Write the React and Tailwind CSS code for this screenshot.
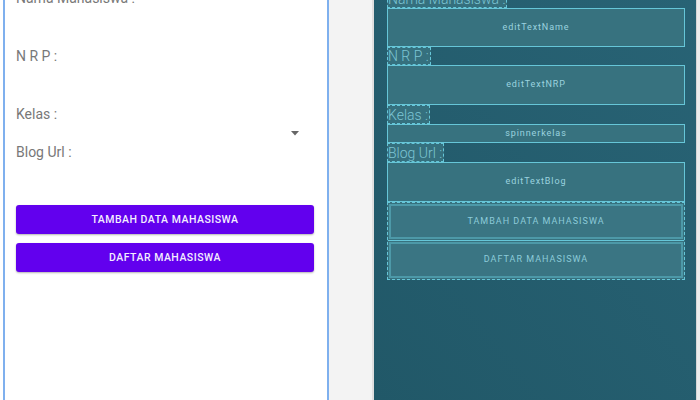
const FONT = { fontFamily: "Roboto, 'Liberation Sans', sans-serif" };

const ROWS = [
  { type: "label", text: "Nama Mahasiswa :", h: "h-[19px]" },
  { type: "edit", id: "editTextName", h: "h-[39px]" },
  { type: "label", text: "N R P :", h: "h-[18px]" },
  { type: "edit", id: "editTextNRP", h: "h-[40px]" },
  { type: "label", text: "Kelas :", h: "h-[19px]" },
  { type: "spinner", id: "spinnerkelas", h: "h-[19px]" },
  { type: "label", text: "Blog Url :", h: "h-[19px]" },
  { type: "edit", id: "editTextBlog", h: "h-[40px]" },
];

const BUTTONS = ["TAMBAH DATA MAHASISWA", "DAFTAR MAHASISWA"];

function DesignView() {
  return (
    <div className="flex flex-col -mt-[11px] pl-[11px] pr-[13px]">
      {ROWS.map((r, i) => {
        if (r.type === "label")
          return (
            <div key={i} className={`${r.h} flex items-center text-[14px] text-[#787878]`}>
              {r.text}
            </div>
          );
        if (r.type === "spinner")
          return (
            <div key={i} className={`${r.h} flex items-center justify-end pr-[15px]`}>
              <svg width="8" height="5" viewBox="0 0 8 5">
                <path d="M0 0h8L4 4.5z" fill="#666" />
              </svg>
            </div>
          );
        return <div key={i} className={r.h} />;
      })}
      {BUTTONS.map((b) => (
        <div key={b} className="h-[38px] pt-[3px] pb-[6px]">
          <div className="h-full rounded-[3px] bg-[#6200ee] shadow-[0_1px_2px_rgba(0,0,0,0.3)] flex items-center justify-center text-[#f4eeff] text-[10.5px] font-medium tracking-[0.5px]">
            {b}
          </div>
        </div>
      ))}
    </div>
  );
}

function BlueprintView() {
  return (
    <div className="flex flex-col -mt-[11px]">
      {ROWS.map((r, i) => {
        if (r.type === "label")
          return (
            <div key={i} className={`${r.h} flex`}>
              <div className="h-full pr-[1px] border border-dashed border-[#66c6d8] bg-[#35707e] flex items-center text-[14px] font-light text-[#7cc5d4] leading-none whitespace-nowrap">
                {r.text}
              </div>
            </div>
          );
        return (
          <div
            key={i}
            className={`${r.h} border border-[#66c6d8] bg-[#37727f] flex items-center justify-center text-[9px] tracking-[0.9px] text-[#9bd3df]`}
          >
            {r.id}
          </div>
        );
      })}
      <div className="border border-dashed border-[#66c6d8] bg-[#37727f]">
        {BUTTONS.map((b, i) => (
          <div key={b} className={`h-[38px] ${i === 0 ? "border-b border-[#66c6d8]" : ""} p-[1px]`}>
            <div className="h-full border-2 border-[#4d99a8] bg-[#3a7583] flex items-center justify-center text-[9px] tracking-[1px] text-[#8ccbd9]">
              {b}
            </div>
          </div>
        ))}
      </div>
    </div>
  );
}

export default function App() {
  return (
    <div className="w-[700px] h-[400px] flex bg-[#f2f2f2] overflow-hidden" style={FONT}>
      <div className="w-[3px] bg-white" />
      <div className="w-[326px] h-full bg-white border-l-[2px] border-r-[2px] border-[#7fb0ee] overflow-hidden">
        <DesignView />
      </div>
      <div className="w-[45px] h-full bg-[#f3f3f3] border-r-[2px] border-[#dfdfdf]" />
      <div className="w-[322px] h-full bg-gradient-to-bl from-[#286375] to-[#215868] pl-[13px] pr-[11px] overflow-hidden">
        <BlueprintView />
      </div>
      <div className="flex-1 h-full bg-[#ececec] border-l border-[#d6d6d6]" />
    </div>
  );
}
